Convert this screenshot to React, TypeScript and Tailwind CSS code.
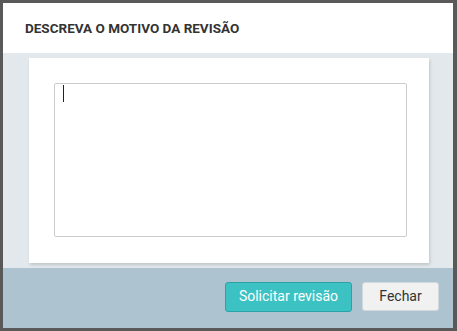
import React from "react";

export default function App() {
  return (
    <div className="w-[457px] h-[331px] bg-[#595959] pt-[3px] pl-[3px] pr-[4px] pb-[3px]" style={{ fontFamily: "Roboto, 'Liberation Sans', sans-serif" }}>
      <div className="flex flex-col h-full w-full bg-[#e2e8eb]">
        <div className="h-[50px] bg-white flex items-center pl-[22px] shrink-0">
          <h2 className="text-[13.5px] font-bold text-[#333333]">DESCREVA O MOTIVO DA REVISÃO</h2>
        </div>
        <div className="flex-1 pt-[5px] pl-[26px] pr-[24px] pb-[5px]">
          <div className="bg-white h-[205px] pt-[25px] pl-[25px] pr-[22px] pb-[26px] shadow-[1px_2px_3px_rgba(0,0,0,0.15)]">
            <div className="relative w-full h-full">
              <textarea className="block w-full h-full resize-none border border-[#cccccc] rounded-[2px] outline-none px-[8px] py-[4px] text-[14px] text-[#333] caret-transparent" />
              <div className="absolute left-[9px] top-[2px] w-[1px] h-[17px] bg-[#222]" />
            </div>
          </div>
        </div>
        <div className="h-[60px] bg-[#adc4d0] shrink-0 flex items-center justify-end gap-[10px] pr-[14px] pb-[3px]">
          <button className="h-[30px] w-[127px] rounded-[3px] bg-[#3dc2c4] border border-[#2aa2a6] text-white text-[14px]">Solicitar revisão</button>
          <button className="h-[29px] w-[77px] rounded-[3px] bg-[#f1f1f1] border border-[#d3d8dc] text-[#333333] text-[14px]">Fechar</button>
        </div>
      </div>
    </div>
  );
}
